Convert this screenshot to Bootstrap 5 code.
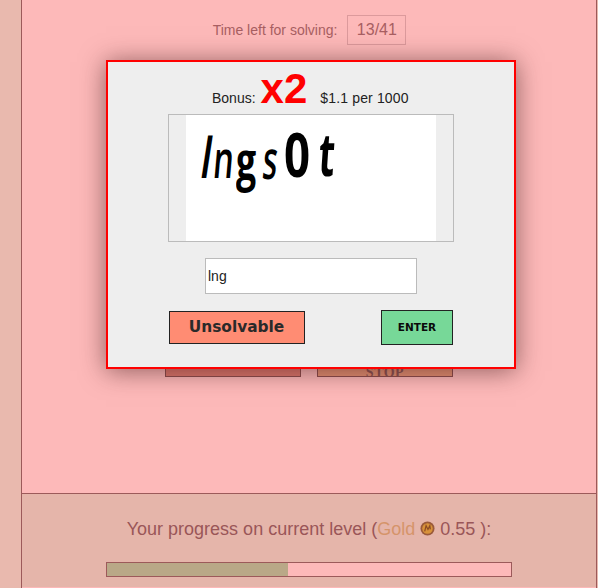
<!DOCTYPE html>
<html lang="en"><head><meta charset="utf-8"><title>Captcha</title>
<link href="https://cdn.jsdelivr.net/npm/bootstrap@5.3.0/dist/css/bootstrap.min.css" rel="stylesheet">
<style>
html,body{height:588px;overflow:hidden;background:#e9b9ae;font-family:"Liberation Sans",Arial,sans-serif;color:#222;font-size:14px}
.shell{height:588px;position:relative}
.side-strip{width:21px;flex:none}
.main-col{width:576px;flex:none;border-left:1px solid #9c5a5a;border-right:1px solid #9c5a5a;background:#fdb9b9;color:#a85f62}
.work-area{height:493px;padding-top:15px}
.time-row{padding-left:1px}
.time-label{font-size:14px;margin-right:10px}
.time-box{width:59px;height:30px;border:1px solid #dc9a9c;font-size:16px;line-height:28px;text-align:center}
.behind-row{margin-top:299px;margin-left:143px;gap:16px}
.behind-btn{width:136px;height:33px;border:1px solid #8a4a4a;font:bold 14px/56px "Liberation Serif",serif;text-align:center;color:#8a5050;overflow:hidden}
.behind-a{background:#dc766c}
.behind-b{background:#e49072;letter-spacing:.5px}
.foot-area{height:94px;background:#e5b5aa;border-top:1px solid #9c5a5a;padding-top:24px;color:#9a5658;font-size:18px;line-height:22px}
.gold-word{color:#d5946a}
.coin-ic{width:15px;height:15px;vertical-align:-1px}
.prog-track{width:406px;height:15px;margin:22px 0 0 84px;border:1px solid #9c5a5a;background:#fdb9b9}
.prog-fill{width:181px;background:#b9a887}
.captcha-modal{position:absolute;left:106px;top:60px;width:410px;height:309px;background:#eee;border:2px solid #f00;box-shadow:0 2px 24px rgba(70,30,30,.6)}
.bonus-line{height:52px;padding-left:104px;padding-top:4px;white-space:nowrap}
.bonus-x{font-size:42px;font-weight:700;color:#f00;line-height:46px;margin:0 13px 0 5px}
.rate-text{letter-spacing:.15px}
.cap-frame{width:286px;height:128px;margin-left:60px;border:1px solid #bbb;padding:0 17px}
.cap-img{width:250px;height:126px;background:#fff;position:relative;color:#000;font-family:"Open Sans","Liberation Sans",sans-serif;filter:blur(.5px)}
.cap-img span{position:absolute;line-height:1;transform-origin:0 0}
.ans-input{display:block;width:212px;height:36px;margin:16px 0 0 97px;border:1px solid #bbb;background:#fff;padding:0 2px;font-size:14px;color:#222;line-height:34px}
.act-row{margin:16px 0 0 61px;width:284px}
.btn-unsolv{width:136px;height:33px;margin-top:1px;padding-right:1px;background:#ff8c73;border:1px solid #222;font:700 15.4px/31px "DejaVu Sans",sans-serif;color:#2a2a2a;text-align:center}
.btn-enter{width:72px;height:35px;background:#77d898;border:1px solid #222;font:700 10.5px/33px "DejaVu Sans",sans-serif;color:#0a0a0a;text-align:center}
</style></head>
<body>
<div class="shell d-flex">
  <div class="side-strip"></div>
  <div class="main-col">
    <div class="work-area">
      <div class="time-row d-flex align-items-center justify-content-center"><span class="time-label">Time left for solving:</span><div class="time-box">13/41</div></div>
      <div class="behind-row d-flex"><div class="behind-btn behind-a"></div><div class="behind-btn behind-b">STOP</div></div>
    </div>
    <div class="foot-area">
      <div class="text-center">Your progress on current level (<span class="gold-word">Gold</span> <svg class="coin-ic" viewBox="0 0 16 16"><circle cx="8" cy="8" r="7.5" fill="#9a5a3a"/><circle cx="8" cy="8" r="5.6" fill="#d8923a"/><path d="M5 11l1.5-6 2 4 2-4 .5 4" fill="none" stroke="#8a4a25" stroke-width="1.3"/></svg> 0.55 ):</div>
      <div class="prog-track d-flex"><div class="prog-fill"></div></div>
    </div>
  </div>
  <div class="captcha-modal">
    <div class="bonus-line d-flex align-items-baseline"><span>Bonus:</span><span class="bonus-x">x2</span><span class="rate-text">$1.1 per 1000</span></div>
    <div class="cap-frame"><div class="cap-img">
      <span style="left:20px;top:13px;font-size:56px;font-weight:600;transform:scaleX(.72) skewX(-12deg)">l</span>
      <span style="left:30px;top:17px;font-size:52px;font-weight:600;transform:scaleX(.62) skewX(-8deg)">n</span>
      <span style="left:50px;top:17px;font-size:54px;font-weight:700;transform:scaleX(.66)">g</span>
      <span style="left:80px;top:16px;font-size:54px;font-weight:600;transform:scaleX(.56) skewX(-10deg)">s</span>
      <span style="left:98px;top:9px;font-size:60px;font-weight:700;transform:scaleX(.76)">0</span>
      <span style="left:135px;top:8px;font-size:60px;font-weight:700;transform:scaleX(.62) skewX(-6deg)">t</span>
    </div></div>
    <div class="ans-input">lng</div>
    <div class="act-row d-flex justify-content-between align-items-start"><div class="btn-unsolv">Unsolvable</div><div class="btn-enter">ENTER</div></div>
  </div>
</div>
<script src="https://cdn.jsdelivr.net/npm/bootstrap@5.3.0/dist/js/bootstrap.bundle.min.js"></script>
</body></html>
